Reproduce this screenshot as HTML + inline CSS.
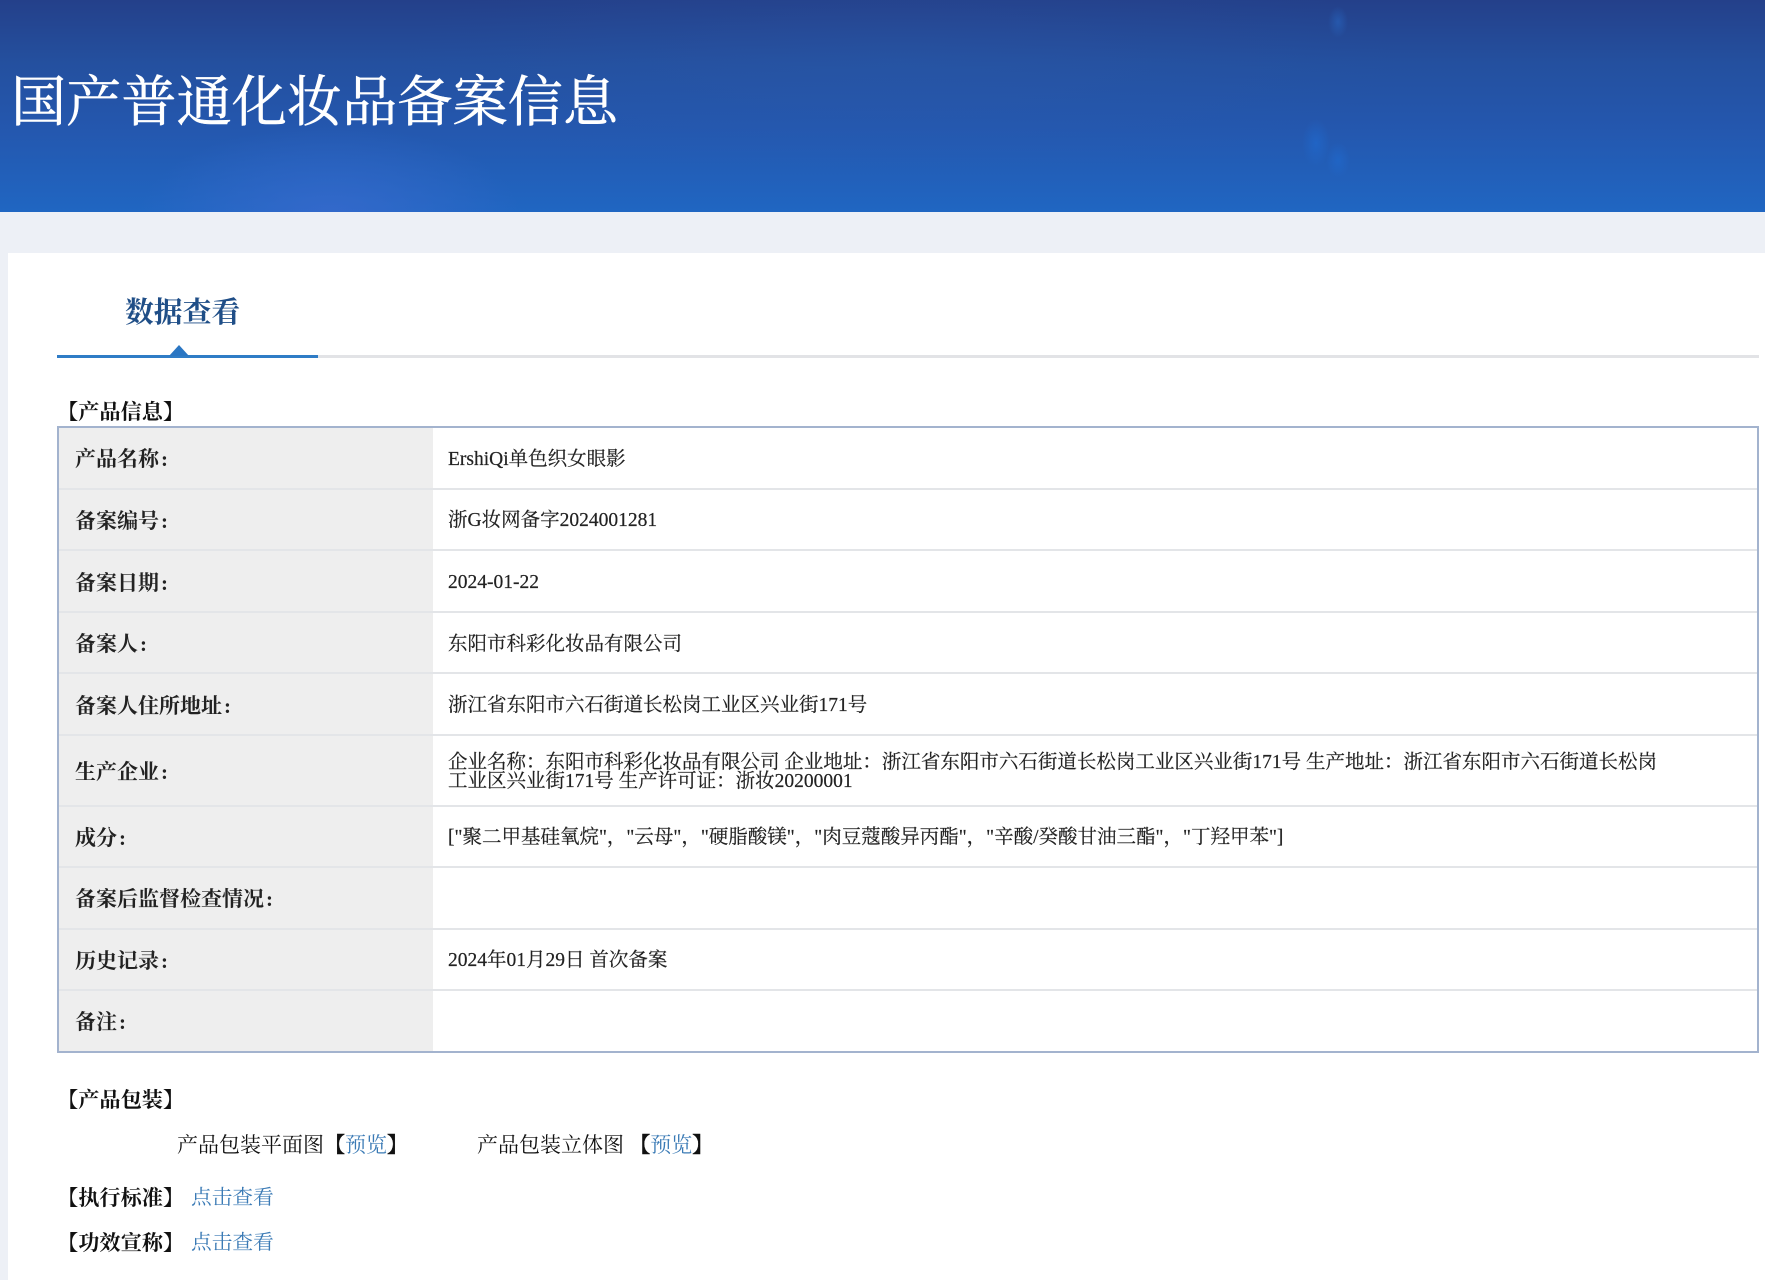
<!DOCTYPE html>
<html lang="zh-CN"><head><meta charset="utf-8"><title>国产普通化妆品备案信息</title>
<style>
*{box-sizing:border-box}
html,body{margin:0;padding:0}
body{width:1765px;height:1280px;position:relative;overflow:hidden;background:#edf0f6;font-family:"Liberation Serif","Noto Serif CJK SC",serif;color:#1c1c1c}
.a{position:absolute;white-space:nowrap}
#hd{left:0;top:0;width:1765px;height:212px;background:
radial-gradient(ellipse 10px 16px at 1338px 22px,rgba(40,110,205,.45),transparent),
radial-gradient(ellipse 14px 24px at 1316px 143px,rgba(30,110,215,.5),transparent),
radial-gradient(ellipse 12px 18px at 1338px 160px,rgba(30,110,215,.45),transparent),
radial-gradient(ellipse 190px 90px at 330px 215px,rgba(56,106,205,.8),rgba(56,106,205,0)),
radial-gradient(ellipse 500px 120px at 900px 60px,rgba(50,100,180,.18),transparent),
linear-gradient(180deg,#24408a 0,#24509f 30%,#2457ae 60%,#2066c2 100%)}
#title{left:11px;top:68px;font-size:55.2px;line-height:70px;color:#fff;font-weight:400;-webkit-text-stroke:.5px #fff}
#panel{left:8px;top:253px;width:1757px;height:1027px;background:#fff}
#tab{left:125px;top:295px;font-size:28.8px;line-height:36px;font-weight:700;color:#1f4e87}
#lg{left:57px;top:355px;width:1702px;height:3px;background:#e2e3e6}
#lb{left:57px;top:355px;width:261px;height:3px;background:#2f7cc6}
#tri{left:169px;top:345px;width:0;height:0;border-left:10px solid transparent;border-right:10px solid transparent;border-bottom:11px solid #2a76c3}
.h{font-size:21.2px;line-height:26px;font-weight:700;color:#111}
#tb{left:57px;top:426px;width:1702px;height:627px;border:2px solid #a3b3ce;background:#fff}
#lc{left:59px;top:428px;width:374px;height:623px;background:#eeeeee}
.ln{left:59px;width:1698px;height:2px;background:#e3e5e8}
.l{left:75px;font-size:21px;line-height:26px;font-weight:700;color:#222}
.l i{font-style:normal;margin-left:2px}
.v{left:448px;font-size:19.5px;line-height:26px;color:#222;-webkit-text-stroke:.2px #222}
.n{font-size:21px;line-height:26px;color:#111}
.n.b,.b{color:#3a7ab5;font-weight:400}
.n.b{font-size:20.7px}
.k{font-weight:700;-webkit-text-stroke:.4px #111}
</style></head><body>
<div class="a" id="hd"></div>
<div class="a" id="title">国产普通化妆品备案信息</div>
<div class="a" id="panel"></div>
<div class="a" id="tab">数据查看</div>
<div class="a" id="lg"></div><div class="a" id="lb"></div><div class="a" id="tri"></div>
<div class="a h" style="left:57px;top:399px">【产品信息】</div>
<div class="a" id="tb"></div><div class="a" id="lc"></div>
<div class="a ln" style="top:488px"></div>
<div class="a ln" style="top:549px"></div>
<div class="a ln" style="top:611px"></div>
<div class="a ln" style="top:672px"></div>
<div class="a ln" style="top:734px"></div>
<div class="a ln" style="top:805px"></div>
<div class="a ln" style="top:866px"></div>
<div class="a ln" style="top:928px"></div>
<div class="a ln" style="top:989px"></div>
<div class="a l" style="top:446px">产品名称<i>:</i></div>
<div class="a l" style="top:508px">备案编号<i>:</i></div>
<div class="a l" style="top:570px">备案日期<i>:</i></div>
<div class="a l" style="top:631px">备案人<i>:</i></div>
<div class="a l" style="top:693px">备案人住所地址<i>:</i></div>
<div class="a l" style="top:759px">生产企业<i>:</i></div>
<div class="a l" style="top:825px">成分<i>:</i></div>
<div class="a l" style="top:886px">备案后监督检查情况<i>:</i></div>
<div class="a l" style="top:948px">历史记录<i>:</i></div>
<div class="a l" style="top:1009px">备注<i>:</i></div>
<div class="a v" style="top:447px">ErshiQi单色织女眼影</div>
<div class="a v" style="top:508px">浙G妆网备字2024001281</div>
<div class="a v" style="top:570px">2024-01-22</div>
<div class="a v" style="top:632px">东阳市科彩化妆品有限公司</div>
<div class="a v" style="top:693px">浙江省东阳市六石街道长松岗工业区兴业街171号</div>
<div class="a v" style="top:750px">企业名称：东阳市科彩化妆品有限公司 企业地址：浙江省东阳市六石街道长松岗工业区兴业街171号 生产地址：浙江省东阳市六石街道长松岗</div>
<div class="a v" style="top:769px">工业区兴业街171号 生产许可证：浙妆20200001</div>
<div class="a v" style="top:825px">["聚二甲基硅氧烷"，"云母"，"硬脂酸镁"，"肉豆蔻酸异丙酯"，"辛酸/癸酸甘油三酯"，"丁羟甲苯"]</div>
<div class="a v" style="top:948px">2024年01月29日 首次备案</div>
<div class="a h" style="left:57px;top:1087px">【产品包装】</div>
<div class="a n" style="left:177px;top:1132px">产品包装平面图<span class="k">【</span><span class="b">预览</span><span class="k">】</span></div>
<div class="a n" style="left:477px;top:1132px">产品包装立体图 <span class="k">【</span><span class="b">预览</span><span class="k">】</span></div>
<div class="a h" style="left:57px;top:1185px">【执行标准】</div>
<div class="a n b" style="left:191px;top:1185px">点击查看</div>
<div class="a h" style="left:57px;top:1230px">【功效宣称】</div>
<div class="a n b" style="left:191px;top:1230px">点击查看</div>
</body></html>
